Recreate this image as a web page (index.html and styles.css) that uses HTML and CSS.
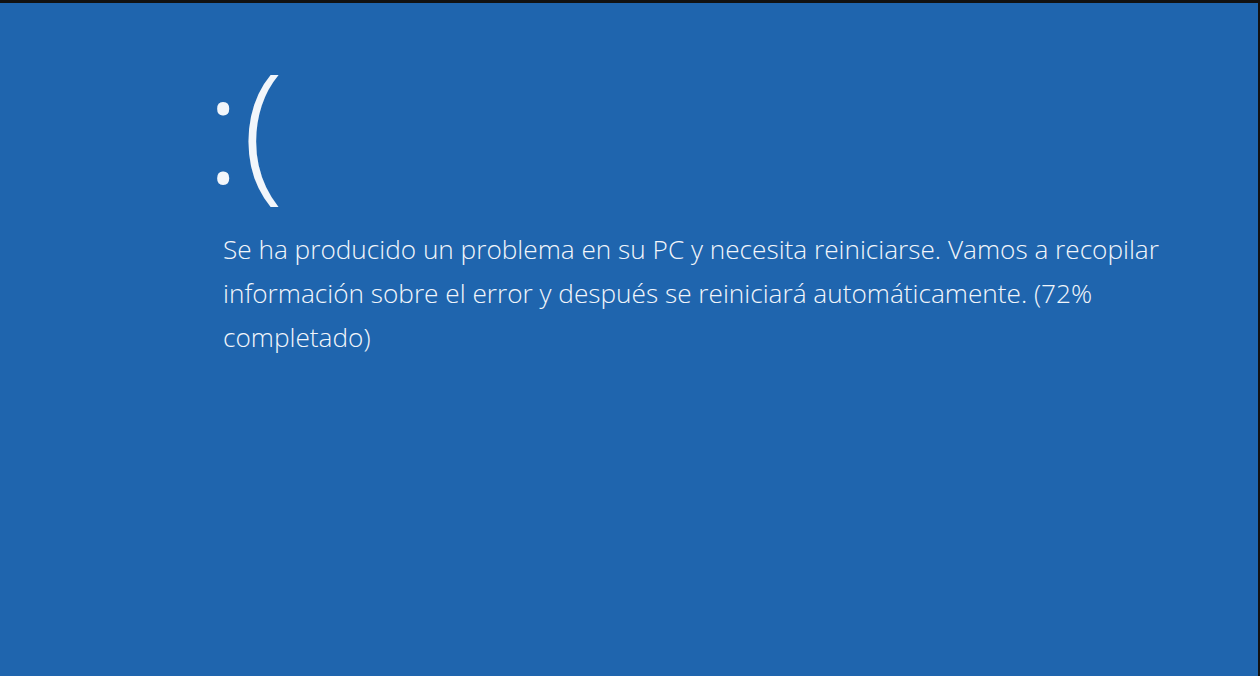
FILE: index.html
```html
<!DOCTYPE html>
<html lang="es">
<head>
<meta charset="utf-8">
<title>Error</title>
<link rel="stylesheet" href="styles.css">
</head>
<body>
<main class="screen">
  <div class="face">:(</div>
  <p class="message">Se ha producido un problema en su PC y necesita reiniciarse. Vamos a recopilar información sobre el error y después se reiniciará automáticamente. (72% completado)</p>
</main>
</body>
</html>
```
FILE: styles.css
```css
html, body {
  margin: 0;
  padding: 0;
  height: 100%;
  background: #121212;
}
body {
  padding: 3px 2px 0 0;
  box-sizing: border-box;
}
.screen {
  height: 100%;
  background: #1f65ae;
  color: #f2f6fb;
  font-family: "Open Sans", "Noto Sans", sans-serif;
  padding: 37px 0 0 205px;
  box-sizing: border-box;
}
.face {
  font-weight: 300;
  font-size: 152px;
  line-height: 170px;
  height: 170px;
  letter-spacing: 1px;
}
.message {
  margin: 17px 0 0 18px;
  width: 1000px;
  font-weight: 300;
  font-size: 26.2px;
  line-height: 44px;
}
```
